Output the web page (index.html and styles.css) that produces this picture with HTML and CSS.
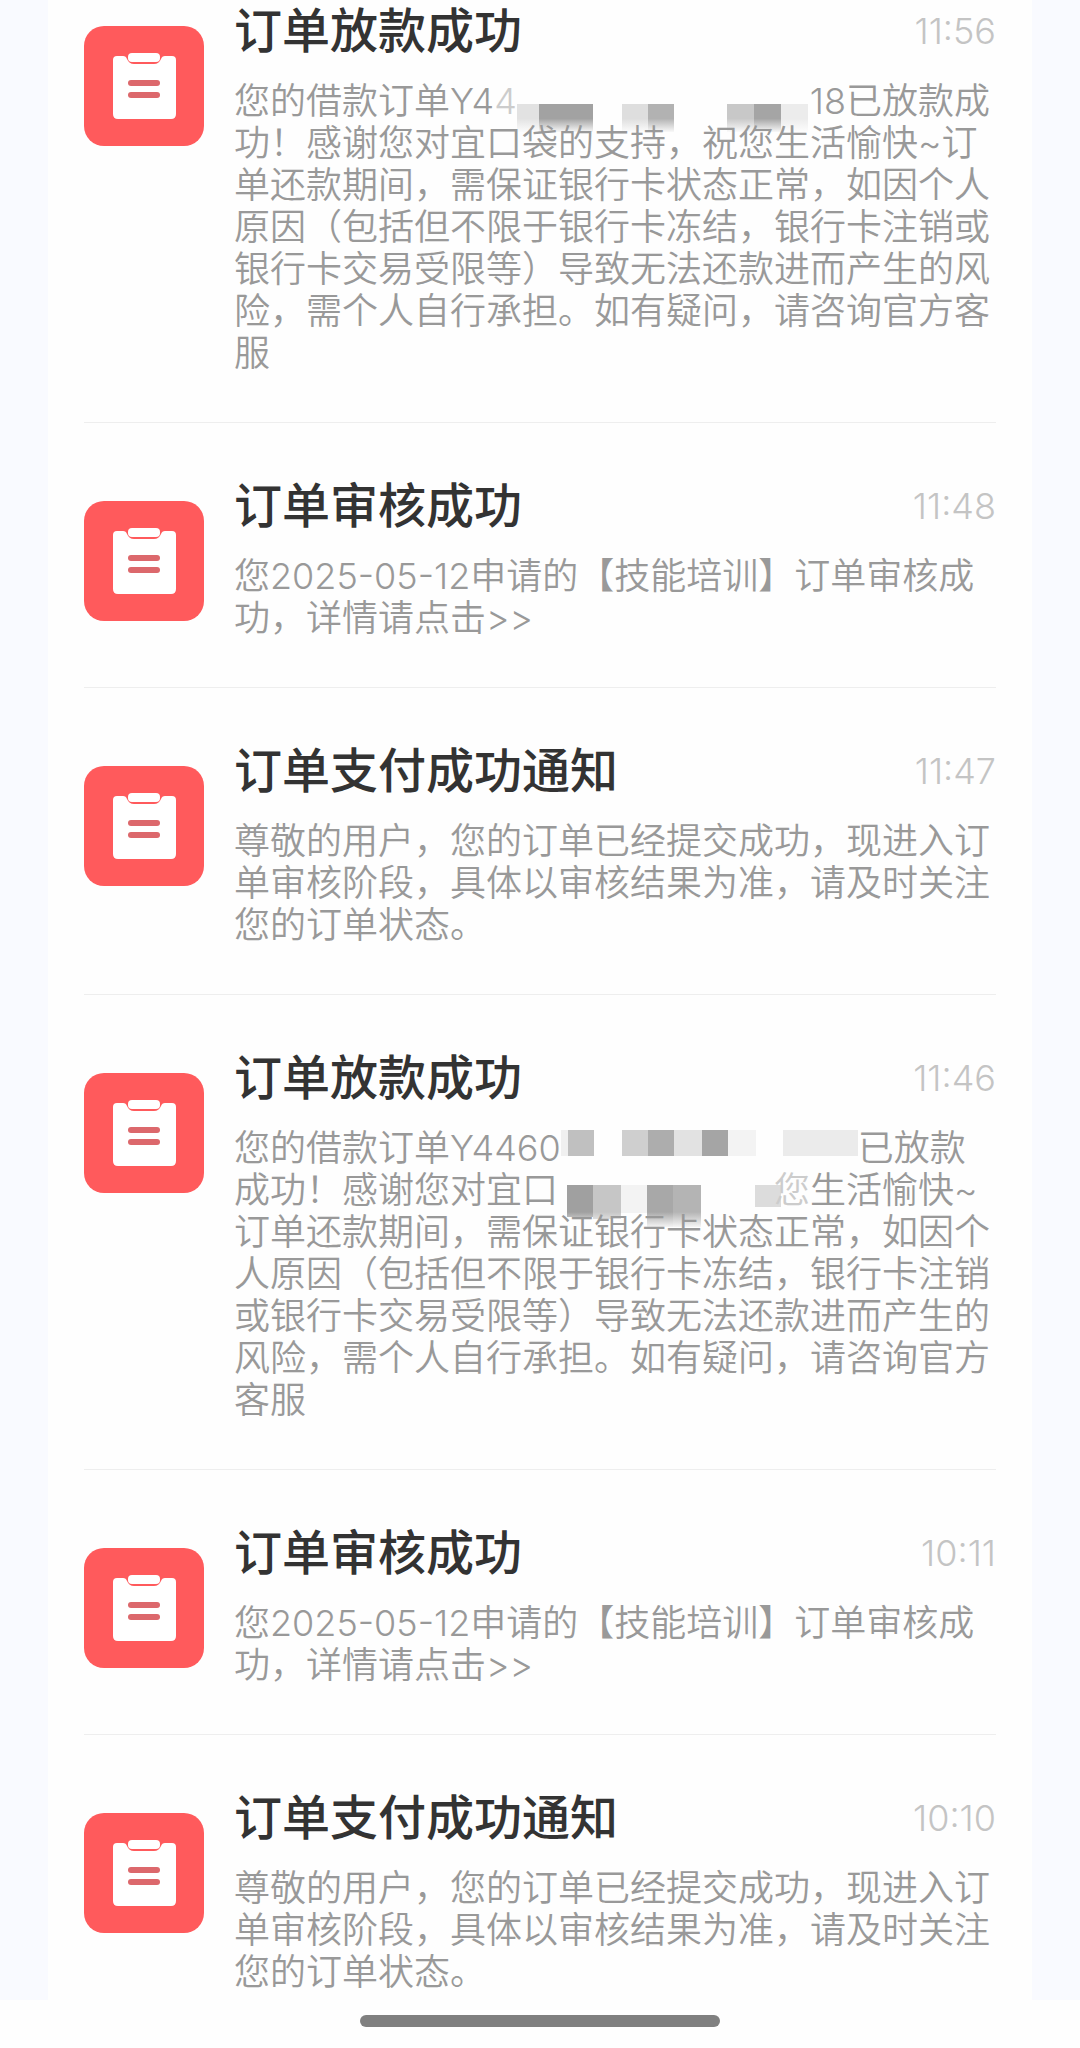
FILE: index.html
```html
<!DOCTYPE html>
<html lang="zh-CN">
<head>
    <meta charset="UTF-8">
    <meta name="viewport" content="width=device-width, initial-scale=1.0">
    <title>消息通知</title>
    <link rel="stylesheet" href="styles.css">
</head>
<body>

    <!-- Icono compartido por todos los mensajes -->
    <svg class="sprite" aria-hidden="true">
        <symbol id="icon-order" viewBox="0 0 120 120">
            <rect width="120" height="120" rx="20" fill="#ff5a5c"/>
            <path d="M33 30H39Q42 30 43 33Q45 38 50 38H70Q75 38 77 33Q78 30 81 30H88Q92 30 92 34V88Q92 93 87 93H34Q29 93 29 88V34Q29 30 33 30Z" fill="#fff"/>
            <rect x="44" y="27" width="32" height="9" rx="4" fill="#fff"/>
            <rect x="44" y="54" width="32" height="6" rx="3" fill="#dc686c"/>
            <rect x="44" y="66" width="32" height="6" rx="3" fill="#dc686c"/>
        </symbol>
    </svg>

    <main class="message-list">
        <article class="message">
            <svg class="icon" aria-hidden="true"><use href="#icon-order"/></svg>
            <div class="content">
                <div class="message-header">
                    <h2>订单放款成功</h2>
                    <time>11:56</time>
                </div>
                <p>您的借款订单Y4<span class="faded">4</span><span class="mask mask-number"><svg class="mosaic" width="293" height="58" aria-hidden="true">
                    <defs>
                        <linearGradient id="fade-down" x1="0" y1="0" x2="0" y2="1">
                            <stop offset="0.5" stop-color="#fefefe" stop-opacity="0"/>
                            <stop offset="1" stop-color="#fefefe"/>
                        </linearGradient>
                    </defs>
                    <rect x="0" y="24" width="22" height="28" fill="#e2e2e2"/>
                    <rect x="22" y="24" width="54" height="28" fill="#a2a2a2"/>
                    <rect x="105" y="24" width="26" height="28" fill="#dedede"/>
                    <rect x="131" y="24" width="26" height="28" fill="#b2b2b2"/>
                    <rect x="210" y="24" width="27" height="28" fill="#c8c8c8"/>
                    <rect x="237" y="24" width="27" height="28" fill="#a5a5a5"/>
                    <rect x="264" y="24" width="27" height="28" fill="#ececec"/>
                    <rect y="24" width="293" height="29" fill="url(#fade-down)"/>
                </svg></span>18已放款成<br>功！感谢您对宜口袋的支持，祝您生活愉快~订<br>单还款期间，需保证银行卡状态正常，如因个人<br>原因（包括但不限于银行卡冻结，银行卡注销或<br>银行卡交易受限等）导致无法还款进而产生的风<br>险，需个人自行承担。如有疑问，请咨询官方客<br>服</p>
            </div>
        </article>

        <article class="message">
            <svg class="icon" aria-hidden="true"><use href="#icon-order"/></svg>
            <div class="content">
                <div class="message-header">
                    <h2>订单审核成功</h2>
                    <time>11:48</time>
                </div>
                <p>您2025-05-12申请的【技能培训】订单审核成<br>功，详情请点击&gt;&gt;</p>
            </div>
        </article>

        <article class="message">
            <svg class="icon" aria-hidden="true"><use href="#icon-order"/></svg>
            <div class="content">
                <div class="message-header">
                    <h2>订单支付成功通知</h2>
                    <time>11:47</time>
                </div>
                <p>尊敬的用户，您的订单已经提交成功，现进入订<br>单审核阶段，具体以审核结果为准，请及时关注<br>您的订单状态。</p>
            </div>
        </article>

        <article class="message">
            <svg class="icon" aria-hidden="true"><use href="#icon-order"/></svg>
            <div class="content">
                <div class="message-header">
                    <h2>订单放款成功</h2>
                    <time>11:46</time>
                </div>
                <p>您的借款订单Y4460<span class="mask mask-order"><svg class="mosaic" width="297" height="42" aria-hidden="true">
                    <rect x="0" y="3" width="7" height="26" fill="#f0f0f0"/>
                    <rect x="7" y="3" width="26" height="26" fill="#c0c0c0"/>
                    <rect x="61" y="3" width="26" height="26" fill="#cfcfcf"/>
                    <rect x="87" y="3" width="26" height="26" fill="#adadad"/>
                    <rect x="113" y="3" width="28" height="26" fill="#e2e2e2"/>
                    <rect x="141" y="3" width="26" height="26" fill="#a5a5a5"/>
                    <rect x="167" y="3" width="28" height="26" fill="#f3f3f3"/>
                    <rect x="222" y="3" width="75" height="26" fill="#ebebeb"/>
                </svg></span>已放款<br>成功！感谢您对宜口<span class="mask mask-name"><svg class="mosaic" width="226" height="60" aria-hidden="true">
                    <rect x="9" y="16" width="26" height="32" fill="#a0a0a0"/>
                    <rect x="35" y="16" width="28" height="34" fill="#c6c6c6"/>
                    <rect x="63" y="16" width="26" height="28" fill="#f3f3f3"/>
                    <rect x="89" y="16" width="26" height="42" fill="#a8a8a8"/>
                    <rect x="115" y="16" width="28" height="42" fill="#b4b4b4"/>
                    <rect x="197" y="16" width="26" height="22" fill="#dcdcdc"/>
                    <rect y="26" width="226" height="34" fill="url(#fade-down)"/>
                </svg></span><span class="faded">您</span>生活愉快~<br>订单还款期间，需保证银行卡状态正常，如因个<br>人原因（包括但不限于银行卡冻结，银行卡注销<br>或银行卡交易受限等）导致无法还款进而产生的<br>风险，需个人自行承担。如有疑问，请咨询官方<br>客服</p>
            </div>
        </article>

        <article class="message">
            <svg class="icon" aria-hidden="true"><use href="#icon-order"/></svg>
            <div class="content">
                <div class="message-header">
                    <h2>订单审核成功</h2>
                    <time>10:11</time>
                </div>
                <p>您2025-05-12申请的【技能培训】订单审核成<br>功，详情请点击&gt;&gt;</p>
            </div>
        </article>

        <article class="message">
            <svg class="icon" aria-hidden="true"><use href="#icon-order"/></svg>
            <div class="content">
                <div class="message-header">
                    <h2>订单支付成功通知</h2>
                    <time>10:10</time>
                </div>
                <p>尊敬的用户，您的订单已经提交成功，现进入订<br>单审核阶段，具体以审核结果为准，请及时关注<br>您的订单状态。</p>
            </div>
        </article>
    </main>

    <footer class="home-bar">
        <div class="home-indicator"></div>
    </footer>

</body>
</html>
```
FILE: styles.css
```css
* {
    box-sizing: border-box;
}
body {
    margin: 0;
    font-family: Inter, "Noto Sans CJK SC", sans-serif;
    background-color: #f9faff;
    color: #333;
    text-spacing-trim: space-all;
}
.sprite {
    position: absolute;
    width: 0;
    height: 0;
}
.message-list {
    margin: 0 48px;
    padding: 0 36px;
    background-color: #fefefe;
}
.message {
    display: flex;
    gap: 30px;
    padding: 55px 0 48px;
    border-bottom: 1px solid #eee;
}
.message:first-child {
    padding-top: 3px;
}
.message:last-child {
    padding-bottom: 7px;
    border-bottom: none;
}
.icon {
    flex: none;
    width: 120px;
    height: 120px;
    margin-top: 23px;
}
.content {
    flex: 1;
    min-width: 0;
}
.message-header {
    display: flex;
    justify-content: space-between;
    align-items: center;
    height: 56px;
    margin-bottom: 21px;
}
.message-header h2 {
    margin: 0;
    font-size: 48px;
    font-weight: 500;
    line-height: 56px;
}
.message-header time {
    font-size: 36px;
    font-weight: 300;
    line-height: 56px;
    color: #c4c4c4;
}
.content p {
    position: relative;
    z-index: 0;
    margin: 0;
    font-size: 36px;
    font-weight: 350;
    line-height: 42px;
    color: #999;
    white-space: nowrap;
}
.content .faded {
    color: #ccc;
}
/* Bloques que ocultan los datos personales */
.mask {
    display: inline-block;
    position: relative;
    height: 42px;
    vertical-align: top;
}
.mask-number {
    width: 293px;
}
.mask-order {
    width: 297px;
}
.mask-name {
    width: 216px;
}
.mosaic {
    position: absolute;
    top: 0;
    left: 0;
    z-index: -1;
}
.home-bar {
    display: flex;
    justify-content: center;
    height: 48px;
    padding-top: 15px;
    background-color: #fefefe;
}
.home-indicator {
    width: 360px;
    height: 12px;
    border-radius: 6px;
    background-color: #808080;
}
```
